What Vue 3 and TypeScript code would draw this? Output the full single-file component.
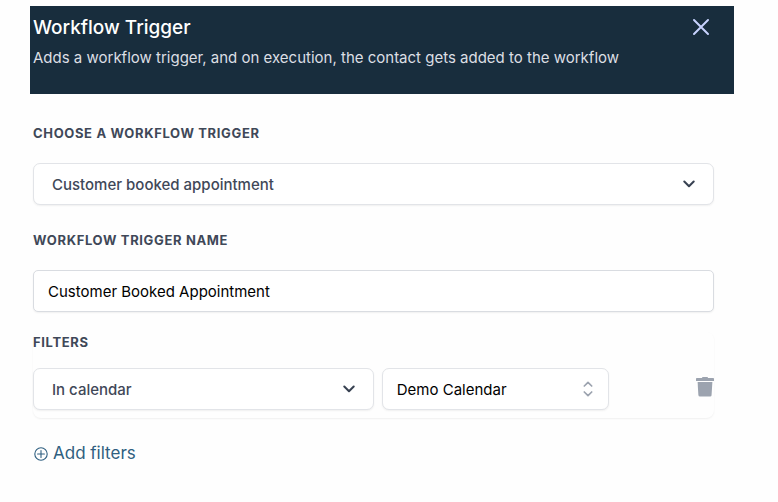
<script setup lang="ts">
import { ref } from 'vue'

const trigger = ref('Customer booked appointment')
const triggerName = ref('Customer Booked Appointment')
const filterField = ref('In calendar')
const filterValue = ref('Demo Calendar')
</script>

<template>
  <main class="panel">
    <header class="header">
      <div>
        <h1 class="title">Workflow Trigger</h1>
        <p class="subtitle">Adds a workflow trigger, and on execution, the contact gets added to the workflow</p>
      </div>
      <button class="icon-button close" type="button" aria-label="Close">
        <svg width="18" height="18" viewBox="0 0 18 18" fill="none" stroke="currentColor" stroke-width="2" stroke-linecap="round">
          <path d="M2 2l14 14M16 2L2 16" />
        </svg>
      </button>
    </header>

    <form class="body" @submit.prevent>
      <label class="label" for="trigger">Choose a workflow trigger</label>
      <div class="control first">
        <select id="trigger" v-model="trigger" class="field dropdown">
          <option>Customer booked appointment</option>
        </select>
        <svg class="chevron" width="12" height="8" viewBox="0 0 12 8" fill="none" stroke="currentColor" stroke-width="2" stroke-linecap="round" stroke-linejoin="round">
          <path d="M1.3 1.5L6 6.2l4.7-4.7" />
        </svg>
      </div>

      <label class="label" for="trigger-name">Workflow trigger name</label>
      <div class="control second">
        <input id="trigger-name" v-model="triggerName" class="field text" type="text" />
      </div>

      <section class="filters" aria-labelledby="filters-title">
        <h2 id="filters-title" class="label">Filters</h2>
        <div class="filter-row">
          <div class="control">
            <select v-model="filterField" class="field dropdown" aria-label="Filter field">
              <option>In calendar</option>
            </select>
            <svg class="chevron" width="12" height="8" viewBox="0 0 12 8" fill="none" stroke="currentColor" stroke-width="2" stroke-linecap="round" stroke-linejoin="round">
              <path d="M1.3 1.5L6 6.2l4.7-4.7" />
            </svg>
          </div>
          <div class="control">
            <select v-model="filterValue" class="field value" aria-label="Filter value">
              <option>Demo Calendar</option>
            </select>
            <svg class="chevron sorter" width="10" height="16" viewBox="0 0 10 16" fill="none" stroke="currentColor" stroke-width="1.7" stroke-linecap="round" stroke-linejoin="round">
              <path d="M1.3 5L5 1.3 8.7 5M1.3 11L5 14.7 8.7 11" />
            </svg>
          </div>
          <button class="icon-button trash" type="button" aria-label="Remove filter">
            <svg width="18" height="20" viewBox="0 0 18 20" fill="currentColor">
              <path d="M6 0.8Q6 0 7 0h4q1 0 1 0.8V1h5.2q0.8 0 0.8 0.8V4H0V1.8Q0 1 0.8 1H6z" />
              <path d="M1.6 5h14.8l-0.8 13q-0.1 1.6-1.6 1.6H4q-1.5 0-1.6-1.6z" />
            </svg>
          </button>
        </div>
      </section>

      <button class="add" type="button">
        <svg width="14" height="14" viewBox="0 0 14 14" fill="none" stroke="currentColor" stroke-width="1.1" stroke-linecap="round">
          <circle cx="7" cy="7" r="6.2" />
          <path d="M7 3.6v6.8M3.6 7h6.8" />
        </svg>
        Add filters
      </button>
    </form>
  </main>
</template>

<style>
body {
  background: #fefefe;
}
</style>

<style scoped>
* {
  box-sizing: border-box;
}

.panel {
  padding: 6px 44px 24px 30px;
  font-family: Inter, "Liberation Sans", sans-serif;
  font-size: 15px;
  color: #374151;
}

.header {
  display: flex;
  justify-content: space-between;
  align-items: flex-start;
  min-height: 88px;
  padding: 8px 24px 20px 3px;
  background: #182d3d;
}

.title {
  margin: 0;
  font-size: 19px;
  font-weight: 500;
  line-height: 28px;
  color: #ffffff;
}

.subtitle {
  margin: 4px 0 0;
  line-height: 24px;
  color: #dcdfe4;
}

.icon-button {
  display: flex;
  padding: 0;
  border: 0;
  background: none;
}

.close {
  padding-top: 4px;
  color: #c7d2fe;
}

.body {
  display: flex;
  flex-direction: column;
  padding: 29px 20px 0 3px;
}

.label {
  margin: 0;
  font-size: 13px;
  font-weight: 700;
  line-height: 20px;
  letter-spacing: 0.05em;
  text-transform: uppercase;
  color: #3f4858;
}

.control {
  display: grid;
  align-items: center;
}

.control > * {
  grid-area: 1 / 1;
}

.first {
  margin: 20px 0 25px;
}

.second {
  margin: 20px 0;
}

.field {
  width: 100%;
  height: 42px;
  margin: 0;
  padding: 0 14px;
  border: 1px solid #e2e4e8;
  border-radius: 7px;
  background: #ffffff;
  box-shadow: 0 1px 2px rgba(0, 0, 0, 0.06);
  font: inherit;
  color: #000000;
  appearance: none;
}

.dropdown {
  padding: 0 18px;
  font-weight: 500;
  color: #3f4858;
}

.text {
  border-color: #d9dce1;
  border-radius: 5px;
}

.chevron {
  justify-self: end;
  margin-right: 19px;
  color: #374151;
  pointer-events: none;
}

.sorter {
  margin-right: 16px;
  color: #9ca3af;
}

.filters {
  padding-bottom: 8px;
  border-radius: 8px;
  box-shadow: 0 1px 2px rgba(0, 0, 0, 0.06);
}

.filter-row {
  display: grid;
  grid-template-columns: 3fr 2fr auto;
  align-items: center;
  column-gap: 8px;
  margin-top: 16px;
}

.trash {
  margin: 0 0 4px 79px;
  color: #9ca3af;
}

.add {
  display: flex;
  align-items: center;
  align-self: flex-start;
  gap: 5px;
  margin-top: 23px;
  padding: 0 0 0 1px;
  border: 0;
  background: none;
  font: inherit;
  font-size: 17px;
  line-height: 24px;
  color: #2f5f80;
}

.add svg {
  margin-top: 2px;
}
</style>
